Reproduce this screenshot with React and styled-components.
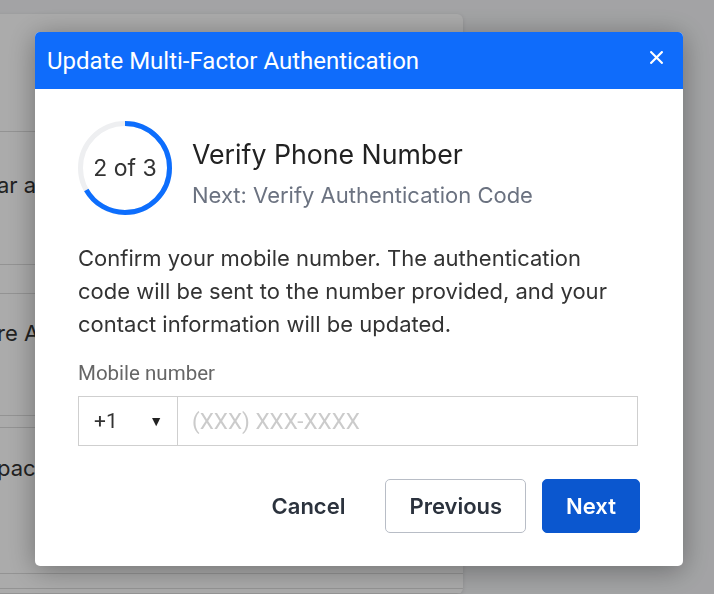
import React from "react";
import styled, { createGlobalStyle } from "styled-components";

const GlobalStyle = createGlobalStyle`
  html, body {
    margin: 0;
    height: 100%;
    overflow: hidden;
  }
  body {
    background: #f3f4f6;
    font-family: Inter, "Noto Sans", sans-serif;
  }
  * {
    box-sizing: border-box;
  }
`;

const rows = [
  { text: "ar agreements and terms", pad: 40, height: 133, gap: 0 },
  { text: "re Access settings", pad: 26, height: 123, gap: 28 },
  { text: "pace members", pad: 27, height: 147, gap: 11 },
  { text: "", pad: 0, height: 6, gap: 14 },
];

const steps = { current: 2, total: 3 };

const ProgressRing = ({ current, total, size = 94, stroke = 5 }) => {
  const r = (size - stroke) / 2;
  const c = 2 * Math.PI * r;
  const done = (current / total) * c;
  return (
    <Ring>
      <svg width={size} height={size} viewBox={`0 0 ${size} ${size}`}>
        <circle cx={size / 2} cy={size / 2} r={r} fill="none" stroke="#eeeff1" strokeWidth={stroke} />
        <circle
          cx={size / 2}
          cy={size / 2}
          r={r}
          fill="none"
          stroke="#0d6efd"
          strokeWidth={stroke}
          strokeDasharray={`${done} ${c}`}
          transform={`rotate(-90 ${size / 2} ${size / 2})`}
        />
      </svg>
      <RingLabel>
        {current} of {total}
      </RingLabel>
    </Ring>
  );
};

const App = () => {
  return (
    <>
      <GlobalStyle />
      <Page>
        <BgCard>
          <BgHeader />
          {rows.map((row, i) => (
            <BgRow key={i} $pad={row.pad} $height={row.height} $gap={row.gap} $first={i === 0}>
              {row.text}
            </BgRow>
          ))}
        </BgCard>
      </Page>
      <Overlay>
        <Modal role="dialog" aria-label="Update Multi-Factor Authentication">
          <ModalHeader>
            <ModalTitle>Update Multi-Factor Authentication</ModalTitle>
            <CloseButton aria-label="Close">
              <svg width="13" height="13" viewBox="0 0 13 13">
                <path d="M1.2 1.2 11.8 11.8M11.8 1.2 1.2 11.8" stroke="#fff" strokeWidth="2.2" strokeLinecap="square" />
              </svg>
            </CloseButton>
          </ModalHeader>
          <ModalBody>
            <StepRow>
              <ProgressRing current={steps.current} total={steps.total} />
              <StepText>
                <StepTitle>Verify Phone Number</StepTitle>
                <StepNext>Next: Verify Authentication Code</StepNext>
              </StepText>
            </StepRow>
            <Description>
              Confirm your mobile number. The authentication code will be sent to the number provided, and your
              contact information will be updated.
            </Description>
            <Label htmlFor="mobile">Mobile number</Label>
            <InputGroup>
              <CountrySelect>
                <span>+1</span>
                <Caret>▼</Caret>
              </CountrySelect>
              <PhoneInput id="mobile" type="tel" placeholder="(XXX) XXX-XXXX" />
            </InputGroup>
            <Footer>
              <Button $variant="ghost">Cancel</Button>
              <Button $variant="outline">Previous</Button>
              <Button $variant="primary">Next</Button>
            </Footer>
          </ModalBody>
        </Modal>
      </Overlay>
    </>
  );
};

const Page = styled.div`
  padding-top: 14px;
`;

const BgCard = styled.div`
  width: 487px;
  margin-left: -24px;
  background: #fff;
  border-radius: 6px;
  box-shadow: 0 1px 4px rgba(0, 0, 0, 0.12);
  overflow: hidden;
`;

const BgHeader = styled.div`
  height: 118px;
  border-bottom: 1px solid #dcdcdc;
`;

const BgRow = styled.div`
  height: ${p => p.$height}px;
  margin-top: ${p => p.$gap}px;
  padding: ${p => p.$pad}px 0 0 21px;
  border-top: ${p => (p.$first ? "none" : "1px solid #dcdcdc")};
  border-bottom: 1px solid #dcdcdc;
  font-size: 22px;
  line-height: 26px;
  color: #333;
  white-space: nowrap;
`;

const Overlay = styled.div`
  position: fixed;
  inset: 0;
  background: rgba(0, 0, 0, 0.33);
  display: flex;
  align-items: flex-start;
  padding: 32px 0 0 35px;
`;

const Modal = styled.div`
  width: 648px;
  background: #fff;
  border-radius: 5px;
  overflow: hidden;
  box-shadow: 0 4px 28px rgba(0, 0, 0, 0.35);
`;

const ModalHeader = styled.div`
  height: 57px;
  background: #0f6cfb;
  display: flex;
  align-items: center;
  justify-content: space-between;
  padding: 0 20px 0 12px;
`;

const ModalTitle = styled.h2`
  margin: 0;
  font-family: Roboto, "Liberation Sans", sans-serif;
  font-weight: 400;
  font-size: 24px;
  color: #fff;
`;

const CloseButton = styled.button`
  background: none;
  border: none;
  padding: 0;
  margin-bottom: 7px;
  display: flex;
  cursor: pointer;
`;

const ModalBody = styled.div`
  padding: 32px 45px 33px 43px;
`;

const StepRow = styled.div`
  display: flex;
  align-items: flex-start;
  gap: 20px;
`;

const Ring = styled.div`
  display: grid;
  place-items: center;
  width: 94px;
  height: 94px;
  flex-shrink: 0;
  > * {
    grid-area: 1 / 1;
  }
`;

const RingLabel = styled.span`
  font-size: 23px;
  color: #333;
`;

const StepText = styled.div`
  padding-top: 17px;
  display: flex;
  flex-direction: column;
  gap: 12px;
`;

const StepTitle = styled.h3`
  margin: 0;
  font-weight: 400;
  font-size: 26.7px;
  line-height: 32px;
  color: #222;
`;

const StepNext = styled.p`
  margin: 0;
  font-size: 22px;
  line-height: 26px;
  color: #6b7280;
`;

const Description = styled.p`
  margin: 27px 0 0;
  max-width: 548px;
  font-size: 22px;
  line-height: 33px;
  color: #333;
`;

const Label = styled.label`
  display: block;
  margin-top: 22px;
  font-family: Roboto, "Liberation Sans", sans-serif;
  font-size: 20.5px;
  line-height: 20px;
  color: #666;
`;

const InputGroup = styled.div`
  margin-top: 13px;
  display: flex;
  height: 50px;
  width: 560px;
  border: 1px solid #cfcfcf;
`;

const CountrySelect = styled.div`
  width: 99px;
  flex-shrink: 0;
  display: flex;
  align-items: center;
  justify-content: space-between;
  padding: 0 14px 0 15px;
  border-right: 1px solid #cfcfcf;
  font-family: Roboto, "Liberation Sans", sans-serif;
  font-size: 21px;
  color: #333;
`;

const Caret = styled.span`
  font-size: 14px;
  color: #222;
`;

const PhoneInput = styled.input`
  flex: 1;
  min-width: 0;
  border: none;
  padding: 0 14px;
  font-family: Roboto, "Liberation Sans", sans-serif;
  font-size: 22.5px;
  color: #333;
  background: transparent;
  &::placeholder {
    color: #cbcbcb;
  }
  &:focus {
    outline: none;
  }
`;

const Footer = styled.div`
  margin-top: 33px;
  margin-right: -2px;
  display: flex;
  justify-content: flex-end;
  gap: 16px;
`;

const variants = {
  ghost: "background: transparent; border: 1px solid transparent; color: #2b323d;",
  outline: "background: #fff; border: 1px solid #b8bdc6; color: #2b323d;",
  primary: "background: #0b57cf; border: 1px solid #0b57cf; color: #fff;",
};

const Button = styled.button`
  height: 54px;
  padding: 0 23px;
  border-radius: 5px;
  font-family: Inter, "Noto Sans", sans-serif;
  font-weight: 600;
  font-size: 22px;
  cursor: pointer;
  ${p => variants[p.$variant]}
`;

export default App;
